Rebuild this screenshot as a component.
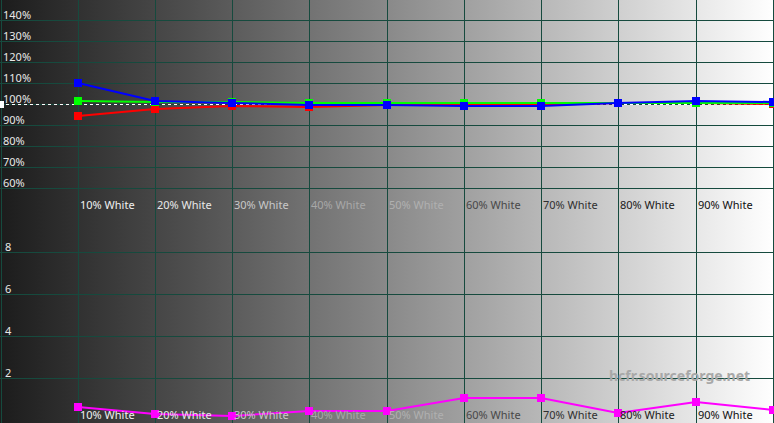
import React from "react";

const xs = [78, 155, 232, 309, 387, 464, 541, 618, 696, 773];
const hLines = [20, 41, 62, 83, 104, 125, 146, 167, 188, 252, 294, 336, 378];
const pctLabels = ["140%", "130%", "120%", "110%", "100%", "90%", "80%", "70%", "60%"];
const series = [
  { color: "#ff0000", ys: [116, 109, 106, 107, 105, 105, 105, 103, 103, 104] },
  { color: "#00ff00", ys: [101, 102, 102, 103, 103, 103, 103, 103, 103, 103] },
  { color: "#0000ff", ys: [83, 101, 103, 105, 105, 106, 106, 103, 101, 102] },
];
const magenta = [407, 414, 416, 411, 411, 398, 398, 413, 402, 410];
const labelColors = ["#f0f0f0", "#e8e8e8", "#c8c8c8", "#a8a8a8", "#b0b0b0", "#484848", "#303030", "#202020", "#101010"];

const Plot = ({ ys, color }) => (
  <g>
    <polyline points={ys.map((y, i) => `${xs[i]},${y}`).join(" ")} fill="none" stroke={color} strokeWidth="2" />
    {ys.map((y, i) => (
      <rect key={i} x={xs[i] - 4} y={y - 4} width="8" height="8" fill={color} />
    ))}
  </g>
);

export default function App() {
  return (
    <div className="relative w-[774px] h-[423px] overflow-hidden bg-[linear-gradient(to_right,#1c1c1c,#505050_25%,#a0a0a0_60%,#ffffff)] text-[11px] font-['Liberation_Sans',Arial,sans-serif]">
      <svg className="absolute inset-0" width="774" height="423">
        {hLines.map((y) => (
          <line key={y} x1="0" x2="774" y1={y + 0.5} y2={y + 0.5} stroke="#164a3e" />
        ))}
        {xs.map((x) => (
          <line key={x} x1={x + 0.5} x2={x + 0.5} y1="0" y2="423" stroke="#164a3e" />
        ))}
        <line x1="1.5" x2="1.5" y1="0" y2="423" stroke="#164a3e" />
        <line x1="0" x2="774" y1="104.5" y2="104.5" stroke="#fff" strokeDasharray="3 3" />
        <rect x="0" y="101" width="4" height="7" fill="#fff" />
        {series.map((s) => (
          <Plot key={s.color} {...s} />
        ))}
        <Plot ys={magenta} color="#ff00ff" />
      </svg>
      {pctLabels.map((t, i) => (
        <span key={t} className="absolute left-[3px] text-[#e8e8e8]" style={{ top: 7 + i * 21 }}>
          {t}
        </span>
      ))}
      {["8", "6", "4", "2"].map((t, i) => (
        <span key={t} className="absolute left-[5px] text-[#e8e8e8]" style={{ top: 239 + i * 42 }}>
          {t}
        </span>
      ))}
      {xs.slice(0, 9).map((x, i) => (
        <React.Fragment key={x}>
          <span className="absolute whitespace-nowrap" style={{ left: x + 2, top: 197, color: labelColors[i] }}>
            {(i + 1) * 10}% White
          </span>
          <span className="absolute whitespace-nowrap" style={{ left: x + 2, top: 407, color: labelColors[i] }}>
            {(i + 1) * 10}% White
          </span>
        </React.Fragment>
      ))}
      <span className="absolute left-[609px] top-[365px] text-[14px] font-bold text-[#a8a8a8]">
        hcfr.sourceforge.net
      </span>
    </div>
  );
}
